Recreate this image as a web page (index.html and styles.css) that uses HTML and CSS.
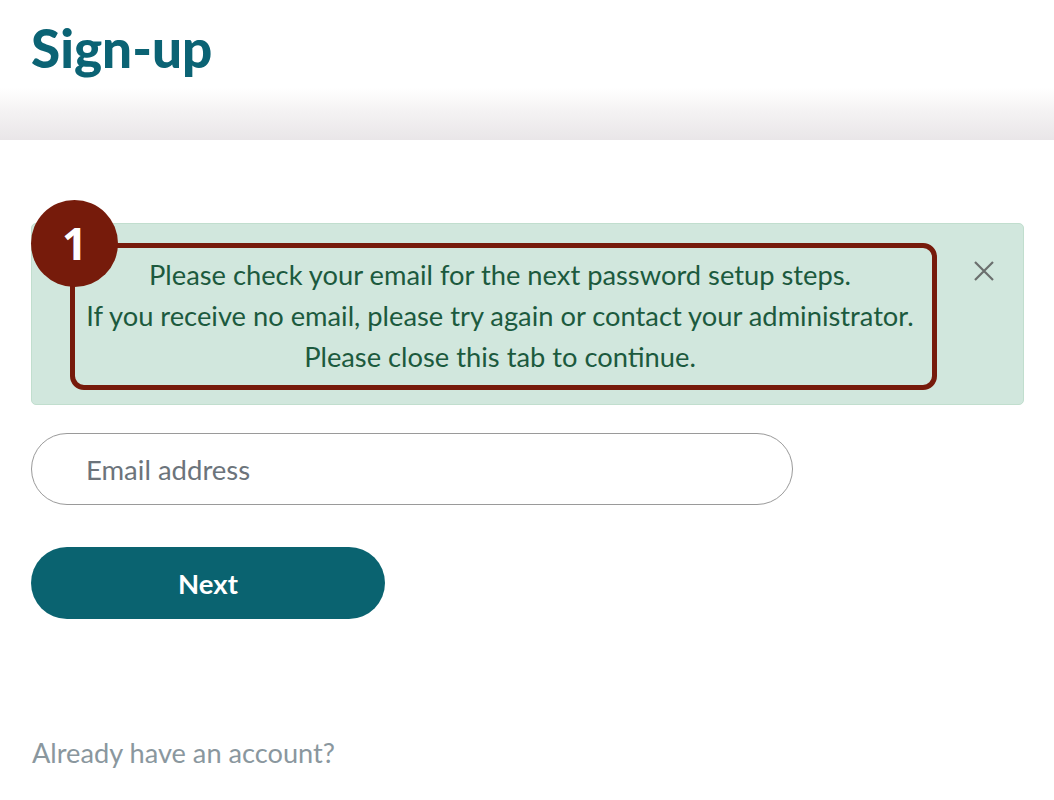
FILE: index.html
```html
<!DOCTYPE html>
<html lang="en">
<head>
<meta charset="utf-8">
<title>Sign-up</title>
<link rel="stylesheet" href="styles.css">
</head>
<body>
<header class="header">
  <h1 class="title">Sign-up</h1>
</header>
<main class="main">
  <div class="alert">
    <div class="alert-text">
      <p>Please check your email for the next password setup steps.</p>
      <p>If you receive no email, please try again or contact your administrator.</p>
      <p>Please close this tab to continue.</p>
    </div>
    <button class="close" aria-label="Close">
      <svg width="22" height="22" viewBox="0 0 22 22"><path d="M2 2L20 20M20 2L2 20" stroke="#6b6f6d" stroke-width="2.2" fill="none"/></svg>
    </button>
    <div class="annot-box"></div>
    <div class="annot-badge">1</div>
  </div>
  <input class="email" type="email" placeholder="Email address">
  <button class="next">Next</button>
  <p class="already">Already have an account?</p>
</main>
</body>
</html>
```
FILE: styles.css
```css
* { box-sizing: border-box; }
html, body { margin: 0; padding: 0; background: #fff; }
body { font-family: Lato, "Open Sans", sans-serif; }
.header {
  height: 140px;
  background: linear-gradient(to bottom, #ffffff 0px, #ffffff 88px, #f4f2f3 112px, #e9e6e8 140px);
  padding: 18px 31px 0;
}
.title {
  margin: 0;
  font-family: Lato, sans-serif;
  font-weight: 900;
  font-size: 53px;
  line-height: 60px;
  color: #0b6374;
}
.main { padding: 83px 30px 0 31px; }
.alert {
  position: relative;
  width: 993px;
  height: 182px;
  background: #d1e7dd;
  border: 1px solid #c1dece;
  border-radius: 5px;
  padding: 30px 79px 0 24px;
}
.alert-text { text-align: center; color: #1c5a3e; font-size: 27.3px; line-height: 41px; }
.alert-text p { margin: 0; }
.close {
  position: absolute;
  top: 36px; right: 28px;
  background: none; border: 0; padding: 0; width: 22px; height: 22px; cursor: pointer;
}
.annot-box {
  position: absolute;
  left: 38px; top: 19px;
  width: 867px; height: 147px;
  border: 5px solid #761b0b;
  border-radius: 14px;
}
.annot-badge {
  position: absolute;
  left: -1px; top: -24px;
  width: 87px; height: 87px;
  border-radius: 50%;
  background: #761b0b;
  color: #fff;
  font-family: "Open Sans", sans-serif;
  font-weight: 700;
  font-size: 44px;
  line-height: 87px;
  text-align: center;
}
.email {
  display: block;
  margin-top: 28px;
  width: 762px; height: 72px;
  border: 1px solid #9a9a9a;
  border-radius: 36px;
  padding: 0 54px;
  font-family: Lato, sans-serif;
  font-size: 27.5px;
  color: #333;
  background: #fff;
  outline: none;
}
.email::placeholder { color: #6c747b; }
.next {
  display: block;
  margin-top: 42px;
  width: 354px; height: 72px;
  border: 0;
  border-radius: 36px;
  background: #0a6370;
  color: #fff;
  font-family: Lato, sans-serif;
  font-weight: 700;
  font-size: 27.5px;
}
.already {
  margin: 118px 0 0 1px;
  color: #8a979e;
  font-size: 27.2px;
  line-height: 32px;
}
```
